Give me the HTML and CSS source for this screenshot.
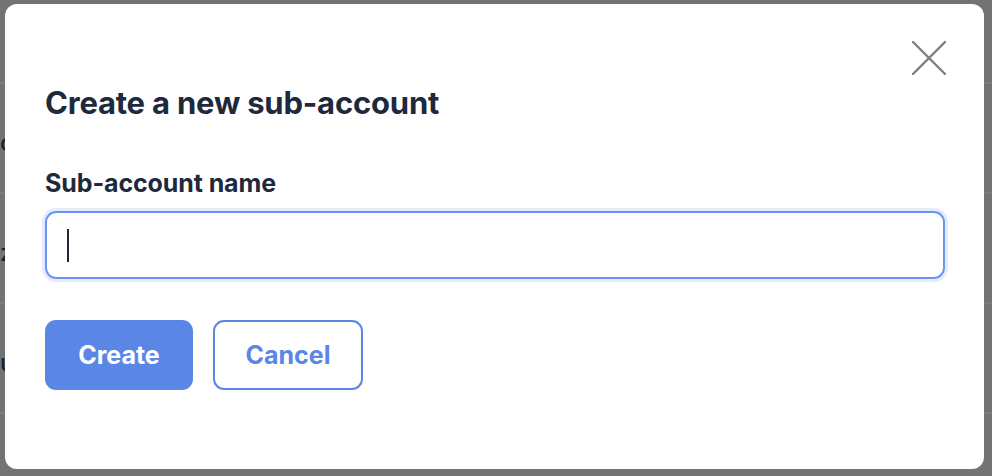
FILE: index.html
```html
<!DOCTYPE html>
<html lang="en">
<head>
<meta charset="utf-8">
<title>Create a new sub-account</title>
<link rel="stylesheet" href="styles.css">
</head>
<body>
<div class="page">
  <div class="table">
    <div class="row row-first"></div>
    <div class="row"><span class="cell">co</span></div>
    <div class="row"><span class="cell">za</span></div>
    <div class="row"><span class="cell">ul</span></div>
    <div class="row"></div>
  </div>
  <div class="modal" role="dialog" aria-labelledby="modal-title">
    <button class="close" type="button" aria-label="Close">
      <svg width="36" height="36" viewBox="0 0 36 36" fill="none" stroke="currentColor" stroke-width="2.4" stroke-linecap="round">
        <path d="M2 2 L34 34 M34 2 L2 34"/>
      </svg>
    </button>
    <h2 class="title" id="modal-title">Create a new sub-account</h2>
    <label class="label" for="name">Sub-account name</label>
    <div class="input"><span class="caret"></span></div>
    <div class="actions">
      <button class="btn btn-primary" type="button">Create</button>
      <button class="btn btn-outline" type="button">Cancel</button>
    </div>
  </div>
</div>
</body>
</html>
```

FILE: styles.css
```css
* { box-sizing: border-box; }
html, body {
  margin: 0;
  padding: 0;
  background: #737373;
  font-family: Inter, "Noto Sans", "Liberation Sans", sans-serif;
}
.page {
  position: relative;
  width: 992px;
  height: 476px;
  overflow: hidden;
}
.table {
  display: flex;
  flex-direction: column;
}
.row {
  height: 110px;
  border-bottom: 2px solid #7c7c7c;
  display: flex;
  align-items: center;
  padding-top: 8px;
}
.row-first {
  height: 84px;
}
.cell {
  margin-left: 0;
  font-size: 24px;
  font-weight: 500;
  color: #1a2233;
}
.modal {
  position: absolute;
  left: 5px;
  top: 4px;
  width: 979px;
  height: 465px;
  background: #ffffff;
  border-radius: 12px;
  padding: 81px 40px 0 40px;
  display: flex;
  flex-direction: column;
}
.close {
  position: absolute;
  top: 36px;
  right: 37px;
  width: 36px;
  height: 36px;
  padding: 0;
  border: 0;
  background: none;
  color: #7f8077;
  display: flex;
}
.title {
  margin: 0;
  font-size: 31px;
  line-height: 36px;
  font-weight: 700;
  color: #1e293b;
  letter-spacing: -0.2px;
}
.label {
  margin-top: 47px;
  font-size: 25px;
  line-height: 30px;
  font-weight: 700;
  color: #1e293b;
  letter-spacing: -0.1px;
}
.input {
  margin-top: 13px;
  height: 68px;
  width: 900px;
  border: 2px solid #6b93f4;
  border-radius: 11px;
  box-shadow: 0 0 0 3px rgba(107, 147, 244, 0.18);
  display: flex;
  align-items: center;
  padding-left: 20px;
}
.caret {
  width: 2px;
  height: 33px;
  background: #1e293b;
}
.actions {
  margin-top: 41px;
  display: flex;
  gap: 20px;
}
.btn {
  height: 70px;
  width: 148px;
  border-radius: 11px;
  font-family: inherit;
  font-size: 25px;
  font-weight: 700;
  padding: 0;
}
.btn-primary {
  background: #5a86e6;
  border: 0;
  color: #ffffff;
}
.btn-outline {
  width: 150px;
  background: #ffffff;
  border: 2px solid #5a86e6;
  color: #5a86e6;
}
```
